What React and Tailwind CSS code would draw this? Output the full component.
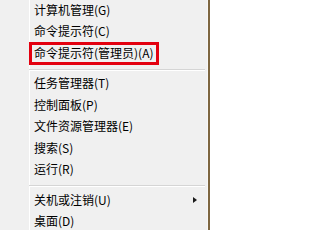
import React from "react";

function Row({ label, arrow, boxed }) {
  return (
    <div className="relative flex h-[21.5px] shrink-0 items-center pl-[4px] pr-[10px]">
      <span className="leading-none whitespace-nowrap">{label}</span>
      {arrow && (
        <span className="ml-auto h-0 w-0 border-t-[3.5px] border-b-[3.5px] border-l-[4px] border-t-transparent border-b-transparent border-l-[#1a1a1a]" />
      )}
      {boxed && (
        <span className="pointer-events-none absolute -left-px top-[-0.5px] bottom-[-1px] w-[130px] border-[3px] border-[#e3000f]" />
      )}
    </div>
  );
}

function Sep() {
  return (
    <div className="flex h-[9px] shrink-0 flex-col pt-[5px] -ml-px mr-[2px]">
      <div className="h-px bg-[#d5d5d5]" />
      <div className="h-px bg-white" />
    </div>
  );
}

export default function App() {
  return (
    <div
      className="flex h-[230px] w-[210px] overflow-hidden bg-[#f0f0f0] text-[12px] text-black"
      style={{ fontFamily: '"Noto Sans CJK SC", "Noto Sans", sans-serif' }}
    >
      <div className="w-[29px] shrink-0" />
      <div className="-mt-px flex flex-1 flex-col border-l border-white">
        <Row label="计算机管理(G)" />
        <Row label="命令提示符(C)" />
        <Row label="命令提示符(管理员)(A)" boxed />
        <Sep />
        <Row label="任务管理器(T)" />
        <Row label="控制面板(P)" />
        <Row label="文件资源管理器(E)" />
        <Row label="搜索(S)" />
        <Row label="运行(R)" />
        <Sep />
        <Row label="关机或注销(U)" arrow />
        <Row label="桌面(D)" />
      </div>
      <div className="w-px shrink-0 bg-[#f7f7f7]" />
      <div className="w-[2px] shrink-0 bg-[#7d6640]" />
    </div>
  );
}
